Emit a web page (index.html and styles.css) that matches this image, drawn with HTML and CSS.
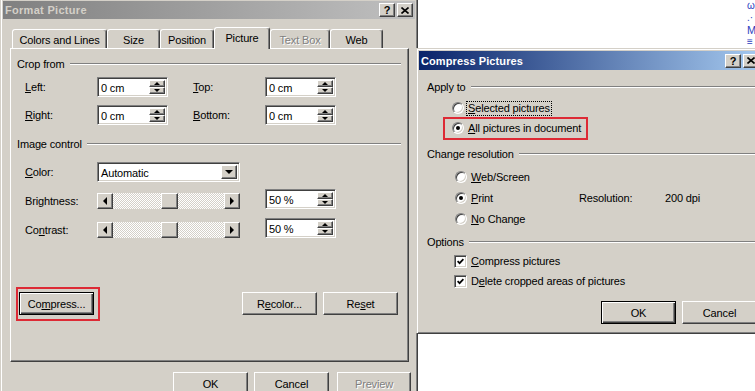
FILE: index.html
```html
<!DOCTYPE html>
<html lang="en">
<head>
<meta charset="utf-8">
<title>Format Picture</title>
<link rel="stylesheet" href="styles.css">
</head>
<body>
<div class="desk">
  <div class="page-edge">
    <span class="pg pg1">ω</span>
    <span class="pg pg2">.·</span>
    <span class="pg pg3">M</span>
    <span class="pg pg4">≡</span>
  </div>

  <div class="win fp">
    <div class="titlebar inactive">
      <span class="ttl">Format Picture</span>
      <span class="tbtns">
        <span class="btn tbtn">?</span>
        <span class="btn tbtn"><svg width="8" height="7" viewBox="0 0 8 7"><path d="M0.5 0.5 L7.5 6.5 M7.5 0.5 L0.5 6.5" stroke="#000" stroke-width="1.6" fill="none"/></svg></span>
      </span>
    </div>
    <div class="tabs">
      <div class="tab w95">Colors and Lines</div>
      <div class="tab w53">Size</div>
      <div class="tab w54">Position</div>
      <div class="tab w56 sel">Picture</div>
      <div class="tab w60 dis">Text Box</div>
      <div class="tab w53">Web</div>
    </div>
    <div class="panel">
      <div class="grp g-crop"><span>Crop from</span><i></i></div>
      <div class="crow r1">
        <span class="lbl"><u>L</u>eft:</span>
        <span class="field spin"><span class="val">0 cm</span><span class="sb"><span class="btn sbtn"><b class="up"></b></span><span class="btn sbtn"><b class="dn"></b></span></span></span>
        <span class="lbl"><u>T</u>op:</span>
        <span class="field spin"><span class="val">0 cm</span><span class="sb"><span class="btn sbtn"><b class="up"></b></span><span class="btn sbtn"><b class="dn"></b></span></span></span>
      </div>
      <div class="crow r2">
        <span class="lbl"><u>R</u>ight:</span>
        <span class="field spin"><span class="val">0 cm</span><span class="sb"><span class="btn sbtn"><b class="up"></b></span><span class="btn sbtn"><b class="dn"></b></span></span></span>
        <span class="lbl"><u>B</u>ottom:</span>
        <span class="field spin"><span class="val">0 cm</span><span class="sb"><span class="btn sbtn"><b class="up"></b></span><span class="btn sbtn"><b class="dn"></b></span></span></span>
      </div>

      <div class="grp g-img"><span>Image control</span><i></i></div>
      <div class="irow row-color">
        <span class="lbl"><u>C</u>olor:</span>
        <span class="field dd"><span class="val">Automatic</span><span class="btn ddb"><b class="darr"></b></span></span>
      </div>
      <div class="irow row-bri">
        <span class="lbl">Bri<u>g</u>htness:</span>
        <span class="slider"><span class="btn slb"><b class="la"></b></span><span class="btn thumb"></span><span class="btn slb slr"><b class="ra"></b></span></span>
        <span class="field spin"><span class="val">50 %</span><span class="sb"><span class="btn sbtn"><b class="up"></b></span><span class="btn sbtn"><b class="dn"></b></span></span></span>
      </div>
      <div class="irow row-con">
        <span class="lbl">Co<u>n</u>trast:</span>
        <span class="slider"><span class="btn slb"><b class="la"></b></span><span class="btn thumb"></span><span class="btn slb slr"><b class="ra"></b></span></span>
        <span class="field spin"><span class="val">50 %</span><span class="sb"><span class="btn sbtn"><b class="up"></b></span><span class="btn sbtn"><b class="dn"></b></span></span></span>
      </div>

      <div class="brow">
        <span class="hl hl-compress"><span class="btn def pbtn">Co<u>m</u>press...</span></span>
        <span class="btn pbtn b-recolor">R<u>e</u>color...</span>
        <span class="btn pbtn b-reset">Re<u>s</u>et</span>
      </div>
    </div>
    <div class="frow">
      <span class="btn pbtn">OK</span>
      <span class="btn pbtn b-cancel">Cancel</span>
      <span class="btn pbtn b-preview dis">Preview</span>
    </div>
  </div>

  <div class="win cp">
    <div class="titlebar active">
      <span class="ttl">Compress Pictures</span>
      <span class="tbtns">
        <span class="btn tbtn">?</span>
        <span class="btn tbtn"><svg width="8" height="7" viewBox="0 0 8 7"><path d="M0.5 0.5 L7.5 6.5 M7.5 0.5 L0.5 6.5" stroke="#000" stroke-width="1.6" fill="none"/></svg></span>
      </span>
    </div>
    <div class="grp g-apply"><span>Apply to</span><i></i></div>
    <div class="rrow r-sel"><span class="radio"></span><span class="focus"><u>S</u>elected pictures</span></div>
    <div class="rrow r-all hl"><span class="radio on"></span><span><u>A</u>ll pictures in document</span></div>

    <div class="grp g-res"><span>Change resolution</span><i></i></div>
    <div class="rrow2 r-web"><span class="radio"></span><span><u>W</u>eb/Screen</span></div>
    <div class="rrow2">
      <span class="rblock"><span class="radio on"></span><span><u>P</u>rint</span></span>
      <span class="res-l">Resolution:</span>
      <span>200 dpi</span>
    </div>
    <div class="rrow2"><span class="radio"></span><span><u>N</u>o Change</span></div>

    <div class="grp g-opt"><span>Options</span><i></i></div>
    <div class="crow2 c1"><span class="cb"><svg width="7" height="7" viewBox="0 0 7 7"><path d="M0.6 3.2 L2.6 5.2 L6.4 1.2" stroke="#000" stroke-width="1.7" fill="none"/></svg></span><span><u>C</u>ompress pictures</span></div>
    <div class="crow2"><span class="cb"><svg width="7" height="7" viewBox="0 0 7 7"><path d="M0.6 3.2 L2.6 5.2 L6.4 1.2" stroke="#000" stroke-width="1.7" fill="none"/></svg></span><span>D<u>e</u>lete cropped areas of pictures</span></div>

    <div class="cbrow">
      <span class="btn def pbtn">OK</span>
      <span class="btn pbtn b-cancel2">Cancel</span>
    </div>
  </div>
</div>
</body>
</html>
```
FILE: styles.css
```css
*, *::before, *::after { box-sizing: border-box; }
html, body { margin: 0; padding: 0; }
body {
  font-family: "Liberation Sans", Arial, sans-serif;
  font-size: 11px;
  letter-spacing: -0.15px;
  color: #000;
  background: #fff;
}
b { display: block; }
u { text-decoration: underline; text-underline-offset: 1px; }

.desk {
  position: relative;
  width: 755px;
  height: 391px;
  overflow: hidden;
  background: #fff;
}

/* background page glimpsed at the right edge */
.page-edge {
  position: absolute;
  left: 747px;
  top: 0;
  display: flex;
  flex-direction: column;
  color: #2b3fbf;
  font-size: 10px;
  line-height: 12px;
}
.pg3 { font-size: 11px; }

/* windows */
.win {
  position: absolute;
  background: #d4d0c8;
  border: 1px solid;
  border-color: #d4d0c8 #404040 #404040 #d4d0c8;
  box-shadow: inset 1px 1px #fff, inset -1px -1px #808080;
  padding: 2px;
}
.fp { left: 0; top: -2px; width: 418px; height: 420px; }
.cp { left: 416px; top: 48px; width: 348px; height: 286px; }

.titlebar {
  height: 18px;
  display: flex;
  align-items: center;
  justify-content: space-between;
  padding: 0 2px;
  font-weight: bold;
  letter-spacing: 0.3px;
}
.cp .titlebar { height: 19px; letter-spacing: 0.1px; }
.inactive { background: linear-gradient(to right, #808080, #c0c0c0); color: #d4d0c8; }
.active { background: linear-gradient(to right, #0a246a, #a6caf0); color: #fff; }
.tbtns { display: flex; gap: 2px; letter-spacing: 0; }

.btn {
  background: #d4d0c8;
  border: 1px solid;
  border-color: #fff #404040 #404040 #fff;
  box-shadow: inset -1px -1px #808080, inset 1px 1px #d4d0c8;
}
.btn.def {
  border-color: #000;
  box-shadow: inset 1px 1px #fff, inset -1px -1px #404040, inset -2px -2px #808080;
}
.tbtn {
  width: 16px;
  height: 14px;
  display: flex;
  align-items: center;
  justify-content: center;
  color: #000;
  font-size: 11px;
  font-weight: bold;
  line-height: 12px;
}

.field {
  background: #fff;
  border: 1px solid;
  border-color: #808080 #fff #fff #808080;
  box-shadow: inset 1px 1px #404040, inset -1px -1px #d4d0c8;
}

/* tabs */
.tabs {
  display: flex;
  align-items: flex-end;
  height: 21px;
  margin-top: 8px;
  padding-left: 9px;
  position: relative;
  z-index: 1;
}
.tab {
  height: 19px;
  border: 1px solid;
  border-bottom: none;
  border-color: #fff #404040 transparent #fff;
  box-shadow: inset -1px 0 #808080;
  border-radius: 3px 3px 0 0;
  text-align: center;
  padding-top: 3px;
  line-height: 14px;
  white-space: nowrap;
  background: #d4d0c8;
}
.tab.sel { height: 22px; margin-bottom: -1px; }
.w95 { width: 95px; }
.w53 { width: 53px; }
.w54 { width: 54px; }
.w56 { width: 56px; }
.w60 { width: 60px; }
.dis { color: #808080; text-shadow: 1px 1px #fff; }

.panel {
  margin-left: 7px;
  width: 399px;
  height: 314px;
  border: 1px solid;
  border-color: #fff #404040 #404040 #fff;
  box-shadow: inset -1px -1px #808080;
}

/* group headers */
.grp {
  display: flex;
  align-items: center;
  height: 14px;
  padding: 0 7px 0 6px;
  line-height: 14px;
}
.grp i {
  flex: 1;
  height: 2px;
  border-top: 1px solid #808080;
  border-bottom: 1px solid #fff;
  margin-left: 5px;
}
.g-crop { margin-top: 8px; }
.g-img { margin-top: 12px; }

/* crop rows */
.crow {
  display: grid;
  grid-template-columns: 72px 96px 72px 71px;
  align-items: center;
  height: 20px;
  padding-left: 14px;
}
.r1 { margin-top: 6px; }
.r2 { margin-top: 8px; }

.spin { width: 71px; height: 20px; display: flex; padding: 2px; }
.spin .val, .dd .val { flex: 1; line-height: 16px; padding-left: 1px; white-space: nowrap; }
.sb { width: 16px; display: flex; flex-direction: column; }
.sbtn { flex: 1; display: flex; align-items: center; justify-content: center; }
.up { border-left: 3px solid transparent; border-right: 3px solid transparent; border-bottom: 3px solid #000; }
.dn { border-left: 3px solid transparent; border-right: 3px solid transparent; border-top: 3px solid #000; }

/* image control rows */
.irow {
  display: grid;
  grid-template-columns: 72px 168px 71px;
  height: 20px;
  padding-left: 14px;
  align-items: end;
}
.irow .lbl { line-height: 16px; }
.row-color { margin-top: 11px; align-items: center; }
.row-bri { margin-top: 7px; }
.row-con { margin-top: 9px; }

.dd { width: 143px; height: 20px; display: flex; padding: 2px; }
.ddb { width: 16px; display: flex; align-items: center; justify-content: center; }
.darr { border-left: 4px solid transparent; border-right: 4px solid transparent; border-top: 4px solid #000; }

.slider {
  width: 143px;
  height: 16px;
  display: flex;
  background: repeating-conic-gradient(#d4d0c8 0 25%, #fff 0 50%) 0 0 / 2px 2px;
}
.slb { width: 16px; height: 16px; display: flex; align-items: center; justify-content: center; }
.slr { margin-left: auto; }
.thumb { width: 17px; height: 16px; margin-left: 48px; }
.la { border-top: 4px solid transparent; border-bottom: 4px solid transparent; border-right: 4px solid #000; }
.ra { border-top: 4px solid transparent; border-bottom: 4px solid transparent; border-left: 4px solid #000; }

/* push buttons */
.pbtn {
  width: 75px;
  height: 23px;
  display: flex;
  align-items: center;
  justify-content: center;
  white-space: nowrap;
}
.brow { display: flex; margin-top: 54px; padding: 0 10px 0 8px; }
.b-recolor { margin-left: auto; }
.b-reset { margin-left: 6px; }

.hl { position: relative; }
.hl-compress::after {
  content: "";
  position: absolute;
  left: -3px;
  top: -5px;
  width: 84px;
  height: 34px;
  border: 2px solid #dd2a35;
}

.frow { display: flex; margin-top: 10px; padding-left: 170px; }
.b-cancel { margin-left: 6px; }
.b-preview { margin-left: 8px; width: 74px; }

/* compress pictures dialog */
.cp .grp { padding: 0 0 0 8px; }
.g-apply { margin-top: 10px; }
.g-res { margin-top: 9px; }
.g-opt { margin-top: 6px; }

.radio {
  flex: none;
  width: 12px;
  height: 12px;
  border-radius: 50%;
  background: #fff;
  border: 1px solid;
  border-color: #808080 #fff #fff #808080;
  box-shadow: inset 1px 1px #404040, inset -1px -1px #d4d0c8;
  display: flex;
  align-items: center;
  justify-content: center;
  margin-right: 4px;
}
.radio.on::after {
  content: "";
  width: 4px;
  height: 4px;
  border-radius: 50%;
  background: #000;
}

.rrow { display: flex; align-items: center; height: 20px; padding-left: 33px; }
.r-sel { margin-top: 4px; }
.focus { outline: 1px dotted #000; padding: 0 1px; margin-left: -1px; line-height: 13px; }
.r-all::after {
  content: "";
  position: absolute;
  left: 24px;
  top: -1px;
  width: 145px;
  height: 23px;
  border: 2px solid #dd2a35;
}

.rrow2 { display: flex; align-items: center; height: 21px; padding-left: 36px; }
.r-web { margin-top: 5px; }
.rblock { display: flex; align-items: center; width: 124px; }
.res-l { width: 86px; }

.crow2 { display: flex; align-items: center; height: 20px; padding-left: 35px; }
.c1 { margin-top: 2px; }
.cb {
  flex: none;
  width: 13px;
  height: 13px;
  background: #fff;
  border: 1px solid;
  border-color: #808080 #fff #fff #808080;
  box-shadow: inset 1px 1px #404040, inset -1px -1px #d4d0c8;
  display: flex;
  align-items: center;
  justify-content: center;
  margin-right: 4px;
}
.cbrow { display: flex; margin-top: 10px; padding-left: 182px; }
.b-cancel2 { margin-left: 6px; }
```
